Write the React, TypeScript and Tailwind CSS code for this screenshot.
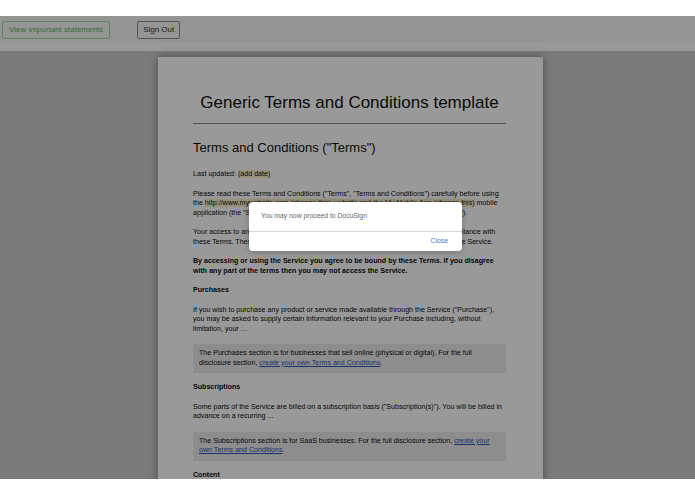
const body = "text-[7.1px] leading-[9.5px] text-[#0d0d0d]";

function Hl({ children }: { children: React.ReactNode }) {
  return <span className="bg-[#fcf1c8]">{children}</span>;
}

function Callout({ children }: { children: React.ReactNode }) {
  return <div className={`${body} bg-[#ebebeb] px-[6px] py-[5px]`}>{children}</div>;
}

function Lnk({ children }: { children: React.ReactNode }) {
  return <a className="text-[#2b55b5] underline">{children}</a>;
}

export default function App() {
  return (
    <div className="h-[494px] w-[695px] overflow-hidden bg-white font-['Liberation_Sans',Arial,sans-serif]">
      <div className="h-[16px]" />
      <div className="relative h-[463px] overflow-hidden bg-[#cdcdcd]">
        {/* top bar */}
        <div className="flex h-[27px] items-center gap-[27px] bg-[#f8f8f8] pl-[2px]">
          <button className="h-[18px] rounded-[2px] border border-[#a8d8a8] px-[6px] text-[8px] text-[#5cb85c]">
            View important statements
          </button>
          <button className="h-[18px] rounded-[2px] border border-[#8a8a8a] px-[5px] text-[8px] text-[#333]">
            Sign Out
          </button>
        </div>
        <div className="h-[8px] bg-white" />

        {/* document */}
        <div className="ml-[158px] mt-[6px] w-[385px] bg-white pl-[35px] pr-[37px] pt-[36px] pb-[20px] shadow-[0_0_9px_rgba(0,0,0,0.4)]">
          <h1 className="text-center text-[17px] leading-[20px] text-[#111]">Generic Terms and Conditions template</h1>
          <div className="mt-[10px] h-px bg-[#888]" />
          <h2 className="mt-[16px] text-[13px] leading-[16px] text-[#111]">Terms and Conditions ("Terms")</h2>
          <div className="mt-[14px] flex flex-col gap-[10px]">
            <p className={body}>
              Last updated: <Hl>(add date)</Hl>
            </p>
            <p className={body}>
              Please read these Terms and Conditions ("Terms", "Terms and Conditions") carefully before using the{" "}
              <Hl>http://www.mywebsite.com (change this) website and the My Mobile App (change this)</Hl> mobile
              application (the "Service") operated by <Hl>My Company (change this)</Hl> ("us", "we", or "our").
            </p>
            <p className={body}>
              Your access to and use of the Service is conditioned on your acceptance of and compliance with these
              Terms. These Terms apply to all visitors, users and others who access or use the Service.
            </p>
            <p className={`${body} font-bold`}>
              By accessing or using the Service you agree to be bound by these Terms. If you disagree with any part of
              the terms then you may not access the Service.
            </p>
            <h3 className={`${body} font-bold`}>Purchases</h3>
            <p className={body}>
              If you wish to purchase any product or service made available through the Service ("Purchase"), you may
              be asked to supply certain information relevant to your Purchase including, without limitation, your …
            </p>
            <Callout>
              The Purchases section is for businesses that sell online (physical or digital). For the full disclosure
              section, <Lnk>create your own Terms and Conditions</Lnk>.
            </Callout>
            <h3 className={`${body} font-bold`}>Subscriptions</h3>
            <p className={body}>
              Some parts of the Service are billed on a subscription basis ("Subscription(s)"). You will be billed in
              advance on a recurring ...
            </p>
            <Callout>
              The Subscriptions section is for SaaS businesses. For the full disclosure section,{" "}
              <Lnk>create your own Terms and Conditions</Lnk>.
            </Callout>
            <h3 className={`${body} font-bold`}>Content</h3>
          </div>
        </div>

        {/* dim overlay */}
        <div className="absolute inset-0 bg-black/40" />

        {/* alert */}
        <div className="absolute left-[249px] top-[186px] w-[213px] rounded-[4px] bg-white shadow-[0_1px_6px_rgba(0,0,0,0.25)]">
          <div className="flex h-[29px] items-center px-[12px] text-[6.8px] text-[#666]">
            You may now proceed to DocuSign
          </div>
          <div className="h-px bg-[#d6d6d6]" />
          <div className="flex h-[19px] items-center justify-end px-[14px] text-[6.8px] text-[#4a80c6]">Close</div>
        </div>
      </div>
    </div>
  );
}
